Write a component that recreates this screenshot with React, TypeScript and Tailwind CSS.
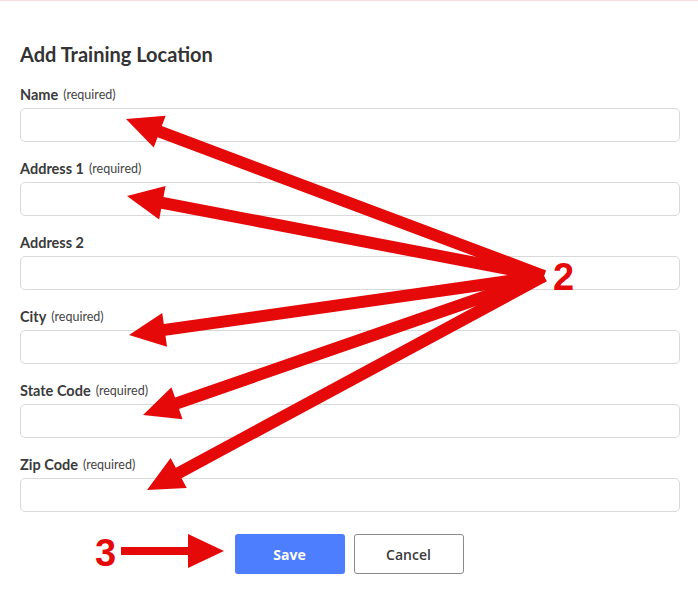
import React from "react";

const FIELDS = [
  { label: "Name", required: true },
  { label: "Address 1", required: true },
  { label: "Address 2", required: false },
  { label: "City", required: true },
  { label: "State Code", required: true },
  { label: "Zip Code", required: true },
];

const RED = "#e60909";

// polygon for a straight arrow from (x1,y1) to tip (x2,y2)
function arrowPoints(x1: number, y1: number, x2: number, y2: number, shaft = 6, headLen = 36, headHalf = 17) {
  const dx = x2 - x1;
  const dy = y2 - y1;
  const len = Math.hypot(dx, dy);
  const ux = dx / len;
  const uy = dy / len;
  const nx = -uy;
  const ny = ux;
  const bx = x2 - ux * headLen;
  const by = y2 - uy * headLen;
  const pts = [
    [x1 + nx * shaft, y1 + ny * shaft],
    [bx + nx * shaft, by + ny * shaft],
    [bx + nx * headHalf, by + ny * headHalf],
    [x2, y2],
    [bx - nx * headHalf, by - ny * headHalf],
    [bx - nx * shaft, by - ny * shaft],
    [x1 - nx * shaft, y1 - ny * shaft],
  ];
  return pts.map((p) => p.join(",")).join(" ");
}

const TIPS = [
  [126, 119],
  [127, 196],
  [129, 335],
  [143, 415],
  [147, 490],
];

function Annotations() {
  return (
    <svg className="pointer-events-none absolute inset-0" width={698} height={601} viewBox="0 0 698 601">
      {TIPS.map(([x, y], i) => (
        <polygon key={i} points={arrowPoints(544, 276, x, y)} fill={RED} />
      ))}
      <text x={553} y={290} fill={RED} fontFamily="'Liberation Sans', Arial, sans-serif" fontWeight={700} fontSize={38}>
        2
      </text>
      <polygon points={arrowPoints(121, 551, 224, 551, 4, 36, 17)} fill={RED} />
      <text x={95} y={566} fill={RED} fontFamily="'Liberation Sans', Arial, sans-serif" fontWeight={700} fontSize={38}>
        3
      </text>
    </svg>
  );
}

export default function App() {
  return (
    <div className="relative h-[601px] w-[698px] overflow-hidden bg-white font-['Lato',sans-serif] text-[#333]">
      <div className="h-[2px] border-t border-[#f4dede]" />
      <div className="px-5 pt-[39px]">
        <h2 className="text-[20px] font-bold leading-[26px] text-[#333]">Add Training Location</h2>
        <div className="mt-[18px] flex flex-col gap-[17px]">
          {FIELDS.map((f) => (
            <div key={f.label}>
              <label className="mb-[3px] flex h-5 items-center gap-[5px] leading-5">
                <span className="text-[14.5px] font-bold text-[#3a3a3a]">{f.label}</span>
                {f.required && <span className="text-[12.5px] text-[#444]">(required)</span>}
              </label>
              <input className="block h-[34px] w-[660px] rounded-[5px] border border-[#d9d9d9] bg-white outline-none" />
            </div>
          ))}
        </div>
        <div className="mt-[22px] flex justify-center gap-[9px] font-['Open_Sans',sans-serif]">
          <button className="h-10 w-[110px] rounded-[3px] bg-[#4d7efe] text-[14px] font-bold text-white">Save</button>
          <button className="h-10 w-[110px] rounded-[3px] border border-[#8a8a8a] bg-white text-[14px] font-semibold text-[#3a3a3a]">
            Cancel
          </button>
        </div>
      </div>
      <Annotations />
    </div>
  );
}
